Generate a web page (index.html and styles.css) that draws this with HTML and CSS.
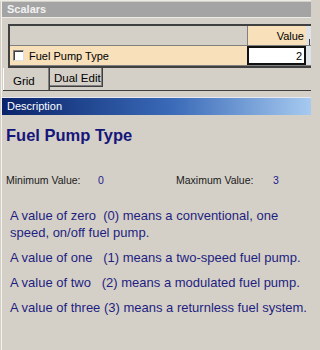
FILE: index.html
```html
<!DOCTYPE html>
<html>
<head>
<meta charset="utf-8">
<link rel="stylesheet" href="styles.css">
</head>
<body>
<div class="app">
  <div class="pane-title">Scalars</div>
  <div class="scalars">
    <div class="grid">
      <div class="grow head">
        <div class="rowhead corner"></div>
        <div class="cell vhead">Value</div>
        <div class="cell extra"><span class="tick"></span></div>
      </div>
      <div class="grow data">
        <div class="rowhead"><span class="chk"></span><span>Fuel Pump Type</span></div>
        <div class="cell val">2</div>
        <div class="cell extra"></div>
      </div>
    </div>
    <div class="tabs">
      <div class="tab active">Grid</div>
      <div class="tab">Dual Edit</div>
    </div>
  </div>
  <div class="desc-title">Description</div>
  <div class="desc">
    <h1 class="heading">Fuel Pump Type</h1>
    <div class="range">
      <span class="lbl">Minimum Value:</span>
      <span class="num">0</span>
      <span class="lbl">Maximum Value:</span>
      <span class="num">3</span>
    </div>
    <p class="para">A value of zero  (0) means a conventional, one speed, on/off fuel pump.</p>
    <p class="para">A value of one   (1) means a two-speed fuel pump.</p>
    <p class="para">A value of two   (2) means a modulated fuel pump.</p>
    <p class="para">A value of three (3) means a returnless fuel system.</p>
  </div>
</div>
</body>
</html>
```

FILE: styles.css
```css
html, body {
  margin: 0;
  padding: 0;
}
body {
  width: 311px;
  height: 350px;
  overflow: hidden;
  background: #d4d0c8;
  font-family: "Liberation Sans", Arial, sans-serif;
}
.app {
  height: 350px;
  box-sizing: border-box;
  padding-left: 2px;
  border-top: 1px solid #ecebe6;
  background: linear-gradient(to right, #d4d0c8 0 1px, #f2f1ec 1px 2px, #d4d0c8 2px);
  display: flex;
  flex-direction: column;
  overflow: hidden;
}
.pane-title {
  margin-top: 1px;
  height: 15px;
  line-height: 15px;
  background: #a4a4a4;
  color: #f2f2f2;
  font-weight: bold;
  font-size: 11px;
  padding-left: 5px;
  border-bottom: 1px solid #ecebe6;
}
.scalars {
  padding-top: 6px;
  padding-left: 1px;
}
.grid {
  margin-left: 5px;
  width: 320px;
  border-top: 2px solid #404040;
  border-left: 2px solid #404040;
  border-bottom: 2px solid #404040;
  box-sizing: border-box;
  background: #d4d0c8;
}
.grow {
  display: flex;
  height: 19px;
  border-bottom: 1px solid #808080;
}
.rowhead {
  width: 237px;
  flex: none;
  display: flex;
  align-items: center;
  font-size: 11px;
  color: #000;
  background: #f8e0ba;
}
.rowhead.corner {
  background: #d4d0c8;
}
.chk {
  width: 9px;
  height: 9px;
  margin: 0 5px 0 3px;
  background: #fff;
  border-top: 1px solid #808080;
  border-left: 1px solid #808080;
  border-right: 1px solid #e0e0e0;
  border-bottom: 1px solid #e0e0e0;
  box-shadow: inset 1px 1px 0 #404040;
}
.cell {
  flex: none;
  box-sizing: border-box;
  font-size: 11px;
  color: #000;
  display: flex;
  align-items: center;
  justify-content: flex-end;
}
.vhead {
  width: 59px;
  background: #f8e0ba;
  border-left: 1px solid #808080;
  padding-right: 2px;
}
.val {
  width: 59px;
  background: #fff;
  border: 2px solid #111;
  padding-right: 2px;
  height: 19px;
}
.extra {
  width: 20px;
  background: #dfe2e6;
  justify-content: flex-start;
  align-items: flex-end;
}
.tick {
  display: block;
  width: 1px;
  height: 6px;
  margin-left: 3px;
  background: #404040;
}
.tabs {
  display: flex;
  height: 22px;
  border-bottom: 1px solid #404040;
  align-items: flex-start;
}
.tab {
  box-sizing: border-box;
  font-size: 11.5px;
  color: #000;
}
.tab.active {
  width: 47px;
  height: 22px;
  padding: 7px 0 0 9px;
  border-left: 1px solid #ffffff;
  border-right: 1px solid #404040;
  box-shadow: inset -1px 0 0 #808080;
}
.tab:not(.active) {
  width: 53px;
  height: 19px;
  padding: 4px 0 0 4px;
  border-right: 1px solid #404040;
  border-bottom: 1px solid #404040;
  box-shadow: inset -1px -1px 0 #808080;
}
.desc-title {
  margin-top: 6px;
  height: 17px;
  line-height: 17px;
  background: linear-gradient(to right, #0a246a, #3a6ab8 55%, #a6caf0);
  color: #ffffff;
  font-size: 11px;
  padding-left: 5px;
  border-top: 1px solid #e8e8f0;
}
.desc {
  padding-left: 4px;
}
.heading {
  margin: 11px 0 0 0;
  font-size: 16.5px;
  line-height: 19px;
  font-weight: bold;
  color: #16167a;
}
.range {
  margin-top: 29px;
  display: grid;
  grid-template-columns: 92px 78px 97px 1fr;
  font-size: 10.5px;
  line-height: 12px;
}
.lbl {
  color: #1a1a1a;
}
.num {
  color: #20208a;
}
.para {
  margin: 0 0 8px 4px;
  font-size: 13px;
  line-height: 17px;
  color: #1e1e80;
  white-space: pre-wrap;
}
.range + .para {
  margin-top: 21px;
}
```
